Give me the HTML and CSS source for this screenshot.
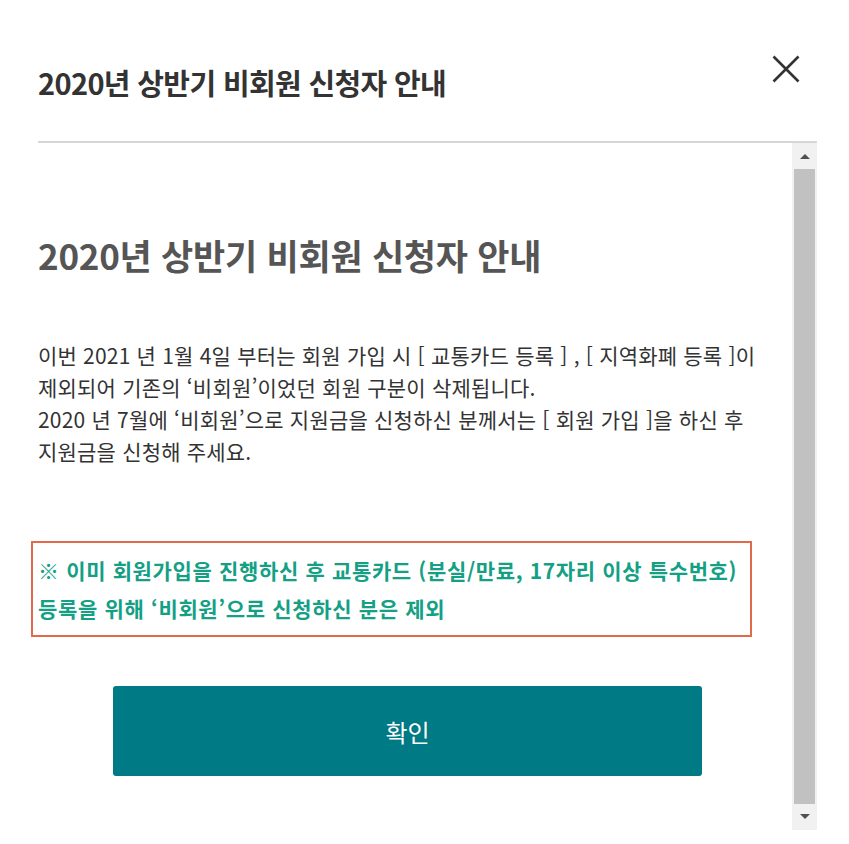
FILE: index.html
```html
<!DOCTYPE html>
<html lang="ko">
<head>
  <meta charset="utf-8">
  <title>2020년 상반기 비회원 신청자 안내</title>
  <link rel="stylesheet" href="styles.css">
</head>
<body>
  <div class="modal">
    <div class="modal-head">
      <h1 class="modal-title">2020년 상반기 비회원 신청자 안내</h1>
      <a href="#close" class="btn-close" aria-label="닫기">
        <svg width="28" height="28" viewBox="0 0 28 28">
          <path d="M1.5 1.5 L26.5 26.5 M26.5 1.5 L1.5 26.5" stroke="#333" stroke-width="2.6" fill="none"/>
        </svg>
      </a>
    </div>

    <div class="modal-body">
      <div class="content">
        <h2 class="content-title">2020년 상반기 비회원 신청자 안내</h2>

        <p class="desc">
          이번 2021 년 1월 4일 부터는 회원 가입 시 [ 교통카드 등록 ] , [ 지역화폐 등록 ]이<br>
          제외되어 기존의 ‘비회원’이었던 회원 구분이 삭제됩니다.<br>
          2020 년 7월에 ‘비회원’으로 지원금을 신청하신 분께서는 [ 회원 가입 ]을 하신 후<br>
          지원금을 신청해 주세요.
        </p>

        <div class="notice">
          ※ 이미 회원가입을 진행하신 후 교통카드 (분실/만료, 17자리 이상 특수번호)<br>
          등록을 위해 ‘비회원’으로 신청하신 분은 제외
        </div>

        <div class="btn-row">
          <a href="#ok" class="btn-ok">확인</a>
        </div>
      </div>

      <div class="scrollbar">
        <span class="arrow arrow-up"></span>
        <span class="thumb"></span>
        <span class="arrow arrow-down"></span>
      </div>
    </div>
  </div>
</body>
</html>
```

FILE: styles.css
```css
* {box-sizing: border-box;}

body {
  margin: 0;
  background: #fff;
  font-family: "Noto Sans CJK KR", "Noto Sans", sans-serif;
  color: #333;
}

.modal {
  width: 849px;
  height: 844px;
  padding: 0 32px 0 38px;
}

/* header */
.modal-head {
  height: 143px;
  display: flex;
  justify-content: space-between;
  align-items: flex-start;
  border-bottom: 2px solid #d6d6d6;
}

.modal-title {
  margin: 62px 0 0;
  font-size: 29px;
  font-weight: bold;
  letter-spacing: -0.65px;
  line-height: 40px;
  color: #333;
}

.btn-close {
  display: block;
  margin: 55px 17px 0 0;
  line-height: 0;
}

/* body */
.modal-body {
  display: flex;
  height: 687px;
  margin-left: -38px;
}

.content {
  flex: 1;
  padding: 0 0 0 38px;
}

.content-title {
  margin: 86px 0 0;
  font-size: 35px;
  font-weight: bold;
  letter-spacing: -0.25px;
  line-height: 52px;
  color: #555;
}

.desc {
  margin: 58px 0 0;
  font-size: 21px;
  line-height: 32px;
  letter-spacing: 0.2px;
  color: #333;
}

.notice {
  margin: 74px 0 0 -7px;
  width: 721px;
  padding: 8px 5px 8px;
  border: 2px solid #e06a4b;
  font-size: 21px;
  font-weight: bold;
  line-height: 38px;
  letter-spacing: 0.65px;
  color: #14a085;
}

.btn-row {
  margin-top: 49px;
  padding-left: 75px;
}

.btn-ok {
  display: flex;
  width: 589px;
  height: 90px;
  align-items: center;
  justify-content: center;
  background: #007a84;
  border-radius: 3px;
  color: #fff;
  font-size: 24px;
  text-decoration: none;
}

/* scrollbar */
.scrollbar {
  width: 25px;
  background: #f1f1f1;
  display: flex;
  flex-direction: column;
  align-items: center;
}

.arrow {
  width: 0;
  height: 0;
  border-left: 5px solid transparent;
  border-right: 5px solid transparent;
}

.arrow-up {
  margin-top: 11px;
  border-bottom: 5px solid #505050;
}

.arrow-down {
  margin-bottom: 11px;
  border-top: 5px solid #505050;
}

.thumb {
  flex: 1;
  width: 21px;
  margin: 10px 0;
  background: #c1c1c1;
}
```
